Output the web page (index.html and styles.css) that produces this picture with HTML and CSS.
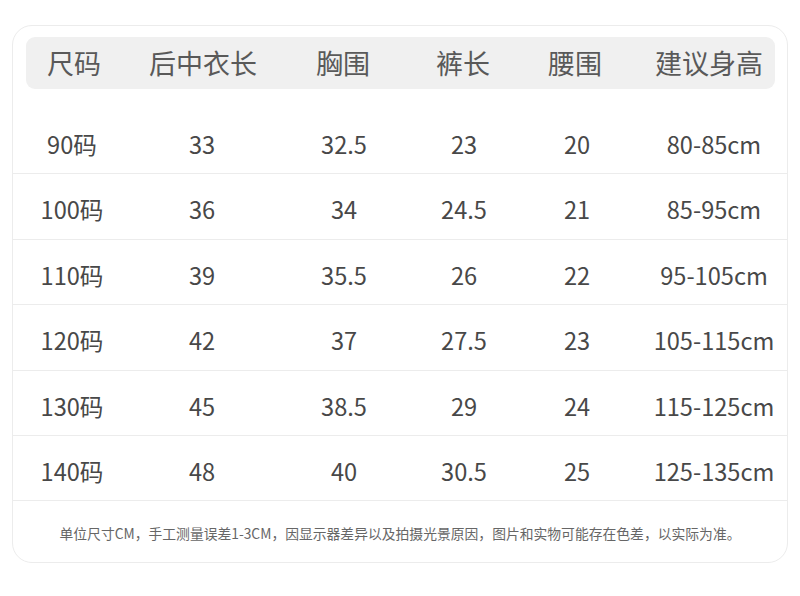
FILE: index.html
```html
<!DOCTYPE html>
<html lang="zh">
<head>
<meta charset="utf-8">
<link rel="stylesheet" href="styles.css">
</head>
<body>
<div class="card">
  <div class="head">
    <div>尺码</div><div>后中衣长</div><div>胸围</div><div>裤长</div><div>腰围</div><div class="last">建议身高</div>
  </div>
  <div class="rows">
    <div class="row"><div>90码</div><div>33</div><div>32.5</div><div>23</div><div>20</div><div>80-85cm</div></div>
    <div class="row"><div>100码</div><div>36</div><div>34</div><div>24.5</div><div>21</div><div>85-95cm</div></div>
    <div class="row"><div>110码</div><div>39</div><div>35.5</div><div>26</div><div>22</div><div>95-105cm</div></div>
    <div class="row"><div>120码</div><div>42</div><div>37</div><div>27.5</div><div>23</div><div>105-115cm</div></div>
    <div class="row"><div>130码</div><div>45</div><div>38.5</div><div>29</div><div>24</div><div>115-125cm</div></div>
    <div class="row"><div>140码</div><div>48</div><div>40</div><div>30.5</div><div>25</div><div>125-135cm</div></div>
  </div>
  <p class="note">单位尺寸CM，手工测量误差1-3CM，因显示器差异以及拍摄光景原因，图片和实物可能存在色差，以实际为准。</p>
</div>
</body>
</html>
```
FILE: styles.css
```css
html, body {
  margin: 0;
  padding: 0;
  background: #ffffff;
}
body {
  padding: 25px 12px 0 12px;
  font-family: "Noto Sans CJK SC", "Noto Sans", sans-serif;
}
.card {
  width: 774px;
  height: 525px;
  border: 1px solid #ececec;
  border-radius: 20px;
  box-sizing: content-box;
  padding-top: 11px;
}
.head {
  margin: 0 12px 0 13px;
  height: 52px;
  background: #f0f0f0;
  border-radius: 9px;
  display: grid;
  grid-template-columns: 96px 162px 118px 122px 102px 149px;
  align-items: center;
  justify-items: center;
  font-size: 27px;
  color: #595959;
  line-height: 52px;
}
.head .last {
  padding-left: 17px;
}
.rows {
  padding-top: 20px;
}
.row {
  display: grid;
  grid-template-columns: 118px 142px 142px 98px 128px 146px;
  justify-items: center;
  height: 65.4px;
  box-sizing: border-box;
  padding-top: 22px;
  border-bottom: 1px solid #ececec;
  font-size: 23.6px;
  line-height: 26px;
  color: #484848;
}
.note {
  margin: 0;
  padding-top: 22px;
  text-align: center;
  font-size: 13.8px;
  line-height: 20px;
  color: #666666;
}
```
